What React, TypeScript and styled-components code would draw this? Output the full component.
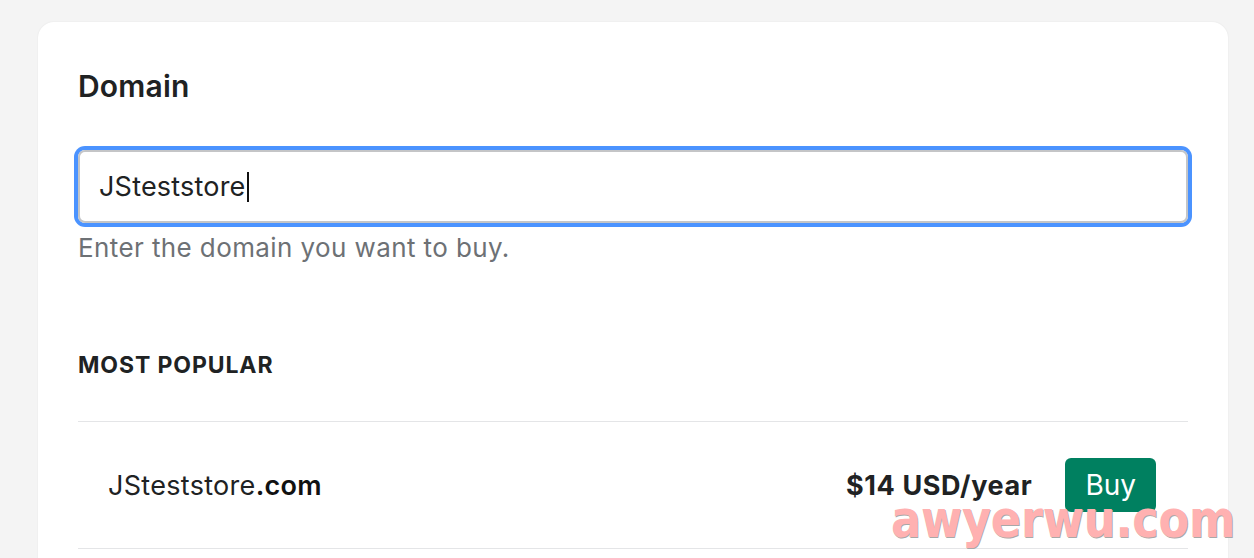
import styled, { createGlobalStyle } from 'styled-components'

const GlobalStyle = createGlobalStyle`
  html, body {
    margin: 0;
    padding: 0;
    background: #f4f4f4;
  }
  body {
    font-family: Inter, "Noto Sans", "Liberation Sans", sans-serif;
    color: #202223;
    -webkit-font-smoothing: antialiased;
  }
`

const Page = styled.div`
  position: relative;
  height: 558px;
  overflow: hidden;
  padding: 22px 26px 0 38px;
  box-sizing: border-box;
`

const Card = styled.section`
  background: #ffffff;
  border-radius: 16px 16px 0 0;
  box-shadow: 0 0 2px rgba(0, 0, 0, 0.07);
  padding: 46px 40px 0 40px;
  height: 600px;
`

const Title = styled.h2`
  margin: 0;
  font-size: 30px;
  line-height: 36px;
  font-weight: 600;
  letter-spacing: 0.2px;
`

const Field = styled.div`
  margin-top: 46px;
  height: 73px;
  box-sizing: border-box;
  border: 2px solid #c4c5c7;
  border-radius: 7px;
  box-shadow: 0 0 0 4px #4b93ff;
  display: flex;
  align-items: center;
  padding-left: 19px;
  font-size: 27px;
  letter-spacing: 0.2px;
  color: #202223;
`

const Caret = styled.span`
  display: inline-block;
  width: 2px;
  height: 30px;
  background: #111;
  margin-left: 1px;
`

const Help = styled.p`
  margin: 8px 0 0;
  font-size: 26px;
  line-height: 34px;
  letter-spacing: 0.4px;
  color: #6d7175;
`

const SectionHeading = styled.h3`
  margin: 85px 0 0;
  font-size: 23px;
  line-height: 30px;
  font-weight: 700;
  letter-spacing: 0.9px;
  text-transform: uppercase;
`

const List = styled.ul`
  list-style: none;
  margin: 41px 0 0;
  padding: 0;
  border-top: 1.5px solid #e4e5e7;
`

const Row = styled.li`
  display: flex;
  align-items: center;
  height: 126px;
  padding: 0 32px 0 30px;
  border-bottom: 1.5px solid #e4e5e7;
`

const Name = styled.span`
  flex: 1;
  font-size: 27px;
  letter-spacing: 0.3px;
  color: #202223;
`

const Tld = styled.b`
  font-weight: 600;
  color: #111;
`

const Price = styled.span`
  font-size: 27px;
  font-weight: 700;
  letter-spacing: 0.6px;
  margin-right: 33px;
`

const BuyButton = styled.button`
  height: 54px;
  padding: 0 20px;
  border: none;
  border-radius: 6px;
  background: #008060;
  color: #ffffff;
  font-family: inherit;
  font-size: 28px;
  cursor: pointer;
`

const Watermark = styled.div`
  position: absolute;
  left: 891px;
  top: 490px;
  font-family: "DejaVu Sans", sans-serif;
  font-weight: 700;
  font-size: 51px;
  line-height: 60px;
  color: #ffb1b1;
  text-shadow: 1px 1px 0 #a8a8a8;
  transform: scaleX(0.87);
  transform-origin: left top;
  white-space: nowrap;
  pointer-events: none;
`

const domains = [{ name: 'JSteststore', tld: '.com', price: '$14 USD/year' }]

const App = () => {
  return (
    <>
      <GlobalStyle />
      <Page>
        <Card>
          <Title>Domain</Title>
          <Field>
            JSteststore
            <Caret />
          </Field>
          <Help>Enter the domain you want to buy.</Help>
          <SectionHeading>Most popular</SectionHeading>
          <List>
            {domains.map((d) => (
              <Row key={d.name + d.tld}>
                <Name>
                  {d.name}
                  <Tld>{d.tld}</Tld>
                </Name>
                <Price>{d.price}</Price>
                <BuyButton>Buy</BuyButton>
              </Row>
            ))}
          </List>
        </Card>
        <Watermark>awyerwu.com</Watermark>
      </Page>
    </>
  )
}

export default App
